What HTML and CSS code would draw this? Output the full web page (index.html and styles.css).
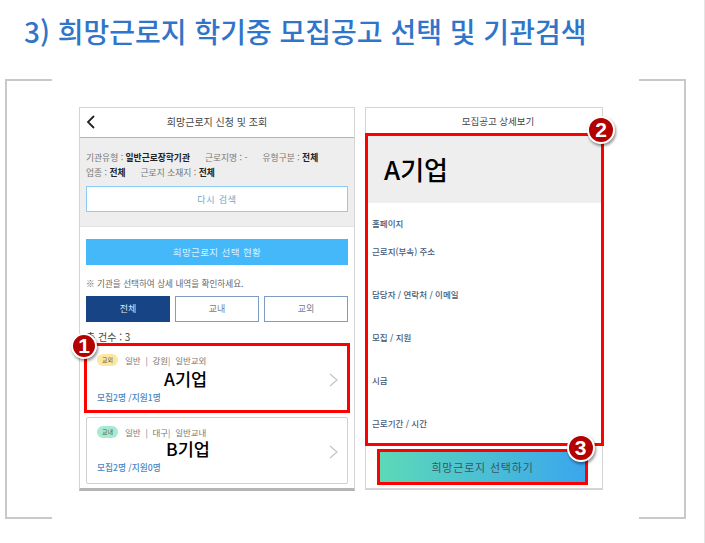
FILE: index.html
```html
<!DOCTYPE html>
<html lang="ko">
<head>
    <meta charset="UTF-8">
    <title>희망근로지 학기중 모집공고 선택 및 기관검색</title>
    <link rel="stylesheet" href="styles.css">
</head>
<body>
    <h1 class="title">3) 희망근로지 학기중 모집공고 선택 및 기관검색</h1>

    <div class="frame">
        <span class="corner top-left"></span>
        <span class="corner top-right"></span>
        <span class="corner bottom-left"></span>
        <span class="corner bottom-right"></span>

        <!-- Left phone: list -->
        <div class="phone phone-list">
            <div class="phone-header">
                <svg class="back" width="10" height="14" viewBox="0 0 10 14"><path d="M8 1 L2 7 L8 13" fill="none" stroke="#222" stroke-width="1.8"/></svg>
                희망근로지 신청 및 조회
            </div>
            <div class="search-info">
                <p class="info-line">기관유형 : <b>일반근로장학기관</b><span class="info-gap"></span>근로지명 : -<span class="info-gap"></span>유형구분 : <b>전체</b></p>
                <p class="info-line">업종 : <b>전체</b><span class="info-gap"></span>근로지 소재지 : <b>전체</b></p>
                <button class="btn-search">다시 검색</button>
            </div>
            <div class="list-body">
                <div class="status-bar">희망근로지 선택 현황</div>
                <p class="note">※ 기관을 선택하여 상세 내역을 확인하세요.</p>
                <div class="tabs">
                    <div class="tab active">전체</div>
                    <div class="tab">교내</div>
                    <div class="tab">교외</div>
                </div>
                <p class="total">총 건수 : 3</p>
                <div class="card card-selected">
                    <div class="card-meta"><span class="tag tag-out">교외</span>일반 &nbsp;|&nbsp; 강원| &nbsp;일반교외</div>
                    <div class="card-name">A기업</div>
                    <div class="card-count">모집2명 /지원1명</div>
                    <svg class="chevron" width="9" height="14" viewBox="0 0 9 14"><path d="M1 1 L8 7 L1 13" fill="none" stroke="#c4c4c4" stroke-width="1.2"/></svg>
                    <span class="num num-1">1</span>
                </div>
                <div class="card">
                    <div class="card-meta"><span class="tag tag-in">교내</span>일반 &nbsp;|&nbsp; 대구| &nbsp;일반교내</div>
                    <div class="card-name card-name-b">B기업</div>
                    <div class="card-count">모집2명 /지원0명</div>
                    <svg class="chevron" width="9" height="14" viewBox="0 0 9 14"><path d="M1 1 L8 7 L1 13" fill="none" stroke="#c4c4c4" stroke-width="1.2"/></svg>
                </div>
            </div>
        </div>

        <!-- Right phone: detail -->
        <div class="phone phone-detail">
            <div class="phone-header detail-header">모집공고 상세보기</div>
            <div class="detail-box">
                <div class="detail-name">A기업</div>
                <div class="detail-rows">
                    <p class="row row-home">홈페이지</p>
                    <p class="row row-addr">근로지(부속) 주소</p>
                    <p class="row row-tall">담당자 / 연락처 / 이메일</p>
                    <p class="row row-tall">모집 / 지원</p>
                    <p class="row row-tall">시급</p>
                    <p class="row row-tall">근로기간 / 시간</p>
                </div>
                <span class="num num-2">2</span>
            </div>
            <div class="select-btn">
                희망근로지 선택하기
                <span class="num num-3">3</span>
            </div>
        </div>
    </div>
</body>
</html>
```

FILE: styles.css
```css
body {
    margin: 0;
    width: 705px;
    height: 543px;
    overflow: hidden;
    background-color: #fff;
    border-right: 1px solid #e4e4e4;
    box-sizing: border-box;
    font-family: "Noto Sans CJK KR", "Noto Sans", sans-serif;
    color: #222;
}
p {
    margin: 0;
}
.title {
    margin: 0;
    padding: 12px 0 0 24px;
    height: 66px;
    box-sizing: border-box;
    font-size: 28px;
    line-height: 38px;
    font-weight: 500;
    letter-spacing: 0;
    color: #2f75c9;
    white-space: nowrap;
}

/* frame with only the corners drawn */
.frame {
    position: relative;
    margin-left: 5px;
    width: 681px;
    height: 440px;
    margin-top: 13px;
    box-sizing: border-box;
    padding: 28px 0 0 74px;
    display: flex;
    align-items: flex-start;
    gap: 10px;
}
.corner {
    position: absolute;
    width: 45px;
    height: 219px;
    border: 0 solid #c9c9c9;
}
.top-left { left: 0; top: 0; border-width: 2px 0 0 2px; }
.top-right { right: 0; top: 0; border-width: 2px 2px 0 0; }
.bottom-left { left: 0; bottom: 0; border-width: 0 0 2px 2px; }
.bottom-right { right: 0; bottom: 0; border-width: 0 2px 2px 0; }

.phone {
    position: relative;
    box-sizing: border-box;
    background-color: #fff;
    border: 1px solid #d4d4d4;
}
.phone-list {
    width: 276px;
    height: 384px;
    border-bottom: 3px solid #b5b5b5;
}
.phone-detail {
    width: 238px;
    height: 383px;
    border-bottom-width: 2px;
}
.phone-header {
    position: relative;
    height: 29px;
    border-bottom: 1px solid #b4b4b4;
    text-align: center;
    font-size: 10px;
    line-height: 28px;
    color: #444;
}
.back {
    position: absolute;
    left: 6px;
    top: 7px;
}

.search-info {
    box-sizing: border-box;
    height: 89px;
    padding: 12px 6px 0;
    background-color: #eee;
    border-bottom: 1px solid #e2e2e2;
}
.info-line {
    font-size: 8.75px;
    line-height: 15px;
    color: #777;
    white-space: nowrap;
}
.info-line b {
    color: #222;
}
.info-gap {
    display: inline-block;
    width: 15px;
}
.btn-search {
    display: block;
    width: 262px;
    height: 26px;
    margin-top: 6px;
    padding: 0;
    background-color: #fff;
    border: 1px solid #8ccbf5;
    font-family: inherit;
    font-size: 9px;
    letter-spacing: 0.8px;
    color: #6fa6cf;
}

.list-body {
    padding: 12px 6px 0;
}
.status-bar {
    height: 26px;
    background-color: #45b8fa;
    text-align: center;
    font-size: 9.5px;
    line-height: 26px;
    letter-spacing: 0.4px;
    color: #d8f0ff;
}
.note {
    margin-top: 11px;
    font-size: 8.6px;
    line-height: 14px;
    color: #666;
}
.tabs {
    display: flex;
    gap: 5px;
    margin-top: 6px;
}
.tab {
    box-sizing: border-box;
    width: 84px;
    height: 26px;
    border: 1px solid #7f9cc0;
    text-align: center;
    font-size: 9px;
    line-height: 24px;
    color: #6f7f95;
}
.tab.active {
    background-color: #164485;
    border-color: #164485;
    color: #dfe8f5;
}
.total {
    margin-top: 8px;
    font-size: 10px;
    line-height: 14px;
    color: #444;
}

.card {
    position: relative;
    box-sizing: border-box;
    width: 262px;
    height: 67px;
    margin-top: 4px;
    padding: 7px 10px 0;
    background-color: #fff;
    border: 1px solid #d0d0d0;
    border-radius: 2px;
}
.card-selected {
    width: 266px;
    height: 70px;
    margin: -1px 0 0 -2px;
    padding: 7px 10px 0 10px;
    border: 3px solid #ff0000;
    border-radius: 0;
}
.card-meta {
    display: flex;
    align-items: center;
    height: 13px;
    font-size: 8.5px;
    color: #777;
    white-space: nowrap;
}
.tag {
    width: 21px;
    height: 12px;
    margin-right: 7px;
    border-radius: 6px;
    text-align: center;
    font-size: 6px;
    line-height: 12px;
    color: #555;
}
.tag-out { background-color: #fde6a0; }
.tag-in { background-color: #a6ead0; }
.card-name {
    height: 24px;
    margin-top: 1px;
    margin-left: 67px;
    font-size: 17.5px;
    line-height: 24px;
    font-weight: 500;
    color: #000;
}
.card-name-b {
    height: 23px;
    margin-top: 0;
    margin-left: 69px;
    line-height: 22px;
}
.card-count {
    font-size: 8.7px;
    line-height: 13px;
    font-weight: 500;
    color: #4a86c5;
}
.chevron {
    position: absolute;
    right: 9px;
    top: 27px;
}

.detail-header {
    border-bottom: 0;
    height: 25px;
    padding-left: 28px;
    font-size: 9.5px;
    line-height: 27px;
}
.detail-box {
    position: relative;
    box-sizing: border-box;
    width: 239px;
    height: 313px;
    margin-left: -1px;
    border: 3px solid #ff0000;
}
.detail-name {
    height: 67px;
    padding-left: 16px;
    background-color: #eee;
    font-size: 26px;
    line-height: 66px;
    font-weight: 500;
    color: #000;
}
.row {
    padding-left: 4px;
    font-size: 8.5px;
    line-height: 14px;
    font-weight: 500;
    color: #445a78;
}
.row-home { margin-top: 13px; }
.row-addr { margin-top: 14px; }
.row-tall { margin-top: 29px; }

.select-btn {
    position: relative;
    box-sizing: border-box;
    width: 211px;
    height: 36px;
    margin: 3px 0 0 11px;
    border: 3px solid #ff0000;
    background: linear-gradient(90deg, #5cd9b8, #3aa6ee);
    text-align: center;
    font-size: 11px;
    line-height: 30px;
    letter-spacing: 0.8px;
    color: #3c5560;
}

/* numbered markers */
.num {
    position: absolute;
    box-sizing: border-box;
    width: 28px;
    height: 28px;
    border: 2px solid #fff;
    border-radius: 50%;
    background-color: #b30000;
    box-shadow: 1px 2px 3px rgba(0, 0, 0, 0.45);
    text-align: center;
    font-family: "Liberation Sans", sans-serif;
    font-size: 21px;
    font-weight: 700;
    line-height: 24px;
    color: #fff;
}
.num-1 { left: -16px; top: -13px; width: 26px; height: 26px; line-height: 22px; }
.num-2 { right: -14px; top: -20px; }
.num-3 { right: -10px; top: -18px; }
```
